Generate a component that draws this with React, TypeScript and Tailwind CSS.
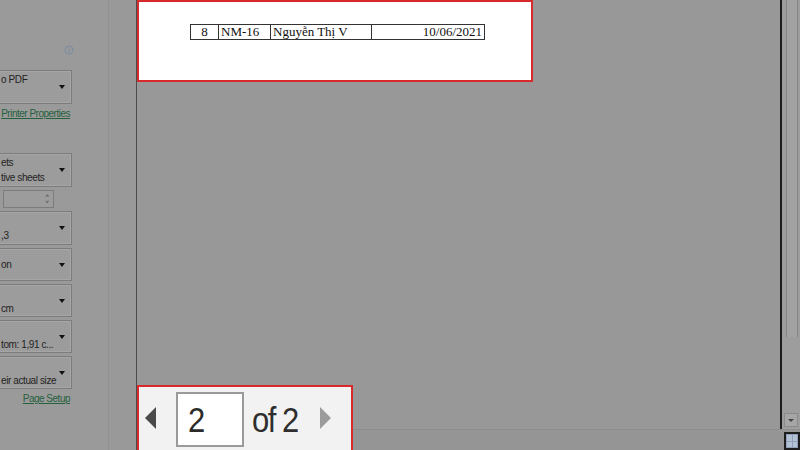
import React from 'react';

const panelFont = { fontFamily: '"Liberation Sans", Arial, sans-serif' };

// dropdown box in the print settings panel, left part is cut off by the window
const SettingBox = ({ line1, line2, h = 'h-[34px]' }: { line1?: string; line2?: string; h?: string }) => (
  <div className={`ml-[-10px] w-[82px] ${h} mt-[3px] flex items-center border border-[#7c7c7c] bg-[#9c9c9c] shadow-[inset_0_0_0_1px_#a6a6a6]`}>
    <div className="flex-1 min-w-0 flex flex-col justify-center pl-[10px] text-[10px] tracking-[-0.4px] leading-[15px] text-[#232323] whitespace-nowrap">
      {line1 !== undefined && <span>{line1 || '\u00a0'}</span>}
      {line2 !== undefined && <span>{line2 || '\u00a0'}</span>}
    </div>
    <div className="w-[8px] flex justify-center mr-[5px]">
      <span className="w-0 h-0 border-l-[3px] border-r-[3px] border-t-[4px] border-l-transparent border-r-transparent border-t-[#111]" />
    </div>
  </div>
);

const PanelLink = ({ children }: { children: string }) => (
  <div className="h-[12px] flex justify-end pr-[2px] text-[10px] tracking-[-0.5px] leading-[12px] text-[#25613d] whitespace-nowrap">
    <span className="underline">{children}</span>
  </div>
);

const SettingsPanel = () => (
  <aside className="w-[137px] shrink-0 h-full flex bg-[#9a9a9a] border-r border-[#4b4b4b] overflow-hidden" style={panelFont}>
    <div className="w-[108px] h-full flex flex-col">
      <div className="w-[72px] flex flex-col">
        <svg className="mt-[45px] ml-[64px]" width="10" height="10" viewBox="0 0 10 10">
          <circle cx="5" cy="5" r="4" fill="none" stroke="#7a8aa3" strokeWidth="1" />
          <rect x="4.5" y="4.2" width="1" height="3" fill="#7a8aa3" />
          <rect x="4.5" y="2.6" width="1" height="1" fill="#7a8aa3" />
        </svg>
        <div className="mt-[12px]">
          <SettingBox line1="o PDF" line2="" />
        </div>
        <div className="mt-[4px]">
          <PanelLink>Printer Properties</PanelLink>
        </div>
        <div className="mt-[30px]">
          <SettingBox line1="ets" line2="tive sheets" />
        </div>
        <div className="mt-[3px] ml-[3px] w-[51px] h-[18px] border border-[#7c7c7c] bg-[#9c9c9c] flex justify-end items-center pr-[4px]">
          <div className="flex flex-col items-center text-[6px] leading-[6px] text-[#333]">
            <span>˄</span>
            <span>˅</span>
          </div>
        </div>
        <SettingBox line1="" line2=",3" />
        <SettingBox line1="on" h="h-[33px]" />
        <SettingBox line1="" line2="cm" h="h-[33px]" />
        <SettingBox line1="" line2="tom: 1,91 c..." h="h-[33px]" />
        <SettingBox line1="" line2="eir actual size" h="h-[33px]" />
        <div className="mt-[4px]">
          <PanelLink>Page Setup</PanelLink>
        </div>
      </div>
    </div>
    <div className="flex-1 h-full border-l border-[#909090] bg-[#999999]" />
  </aside>
);

const PagePreview = () => (
  <div className="w-[396px] h-[82px] shrink-0 bg-white border-2 border-[#d82a2c] pl-[51px] pt-[22px]" style={{ fontFamily: '"Liberation Serif", "Times New Roman", serif' }}>
    <table className="border-collapse text-[13px] leading-[14px] text-[#111]">
      <tbody>
        <tr>
          <td className="w-[28px] border border-[#333] text-center">8</td>
          <td className="w-[52px] border border-[#333] pl-[2px]">NM-16</td>
          <td className="w-[101px] border border-[#333] pl-[2px]">Nguyễn Thị V</td>
          <td className="w-[113px] border border-[#333] text-right pr-[2px]">10/06/2021</td>
        </tr>
      </tbody>
    </table>
  </div>
);

const PageNav = () => (
  <div className="w-[216px] h-[65px] shrink-0 bg-[#f2f2f2] border-2 border-b-0 border-[#d82a2c] flex items-start pt-[5px]" style={{ fontFamily: '"Liberation Sans", Arial, sans-serif' }}>
    <span className="mt-[15px] ml-[6px] w-0 h-0 border-t-[11px] border-b-[11px] border-r-[11px] border-t-transparent border-b-transparent border-r-[#4a4a4a]" />
    <div className="ml-[20px] w-[68px] h-[55px] bg-white border-2 border-[#9a9a9a] flex items-center pl-[10px]">
      <span className="text-[31px] leading-none text-[#2b2b2b] scale-y-115">2</span>
    </div>
    <span className="ml-[8px] mt-[12px] text-[31px] leading-none tracking-[-1.5px] text-[#2e2e2e] scale-y-115">of 2</span>
    <span className="mt-[15px] ml-[22px] w-0 h-0 border-t-[11px] border-b-[11px] border-l-[11px] border-t-transparent border-b-transparent border-l-[#9b9b9b]" />
  </div>
);

const Scrollbar = () => (
  <div className="w-[20px] shrink-0 flex flex-col">
    <div className="flex-1 flex flex-col border-l-2 border-[#1c1c1c] bg-[#9d9d9d] pl-[4px] pr-[2px]">
      <div className="h-[337px] border-l border-r border-[#858585] bg-[#a2a2a2]" />
      <div className="flex-1" />
      <div className="h-[14px] mb-[2px] ml-[-2px] border border-[#8a8a8a] bg-[#a6a6a6] flex items-center justify-center">
        <span className="w-0 h-0 border-l-[3px] border-r-[3px] border-t-[3px] border-l-transparent border-r-transparent border-t-[#444]" />
      </div>
    </div>
    <div className="h-[21px] border-t border-[#8e8e8e] bg-[#959595] flex items-end justify-end">
      <div className="w-[16px] h-[18px] border-2 border-[#1e1e1e] bg-[#8fa0b8] grid grid-cols-2 gap-[1px] p-[1px]">
        <div className="bg-[#b4c2d6]" />
        <div className="bg-[#b4c2d6]" />
        <div className="bg-[#b4c2d6]" />
        <div className="bg-[#b4c2d6]" />
      </div>
    </div>
  </div>
);

export default function App() {
  return (
    <div className="w-[800px] h-[450px] flex overflow-hidden bg-[#999999]">
      <SettingsPanel />
      <div className="flex-1 flex flex-col min-w-0">
        <div className="flex-1 bg-[#989898]">
          <PagePreview />
        </div>
        <div className="h-[65px] flex">
          <PageNav />
          <div className="flex-1 flex flex-col">
            <div className="flex-1 bg-[#989898]" />
            <div className="h-[21px] border-t border-[#8c8c8c] bg-[#959595]" />
          </div>
        </div>
      </div>
      <Scrollbar />
    </div>
  );
}
